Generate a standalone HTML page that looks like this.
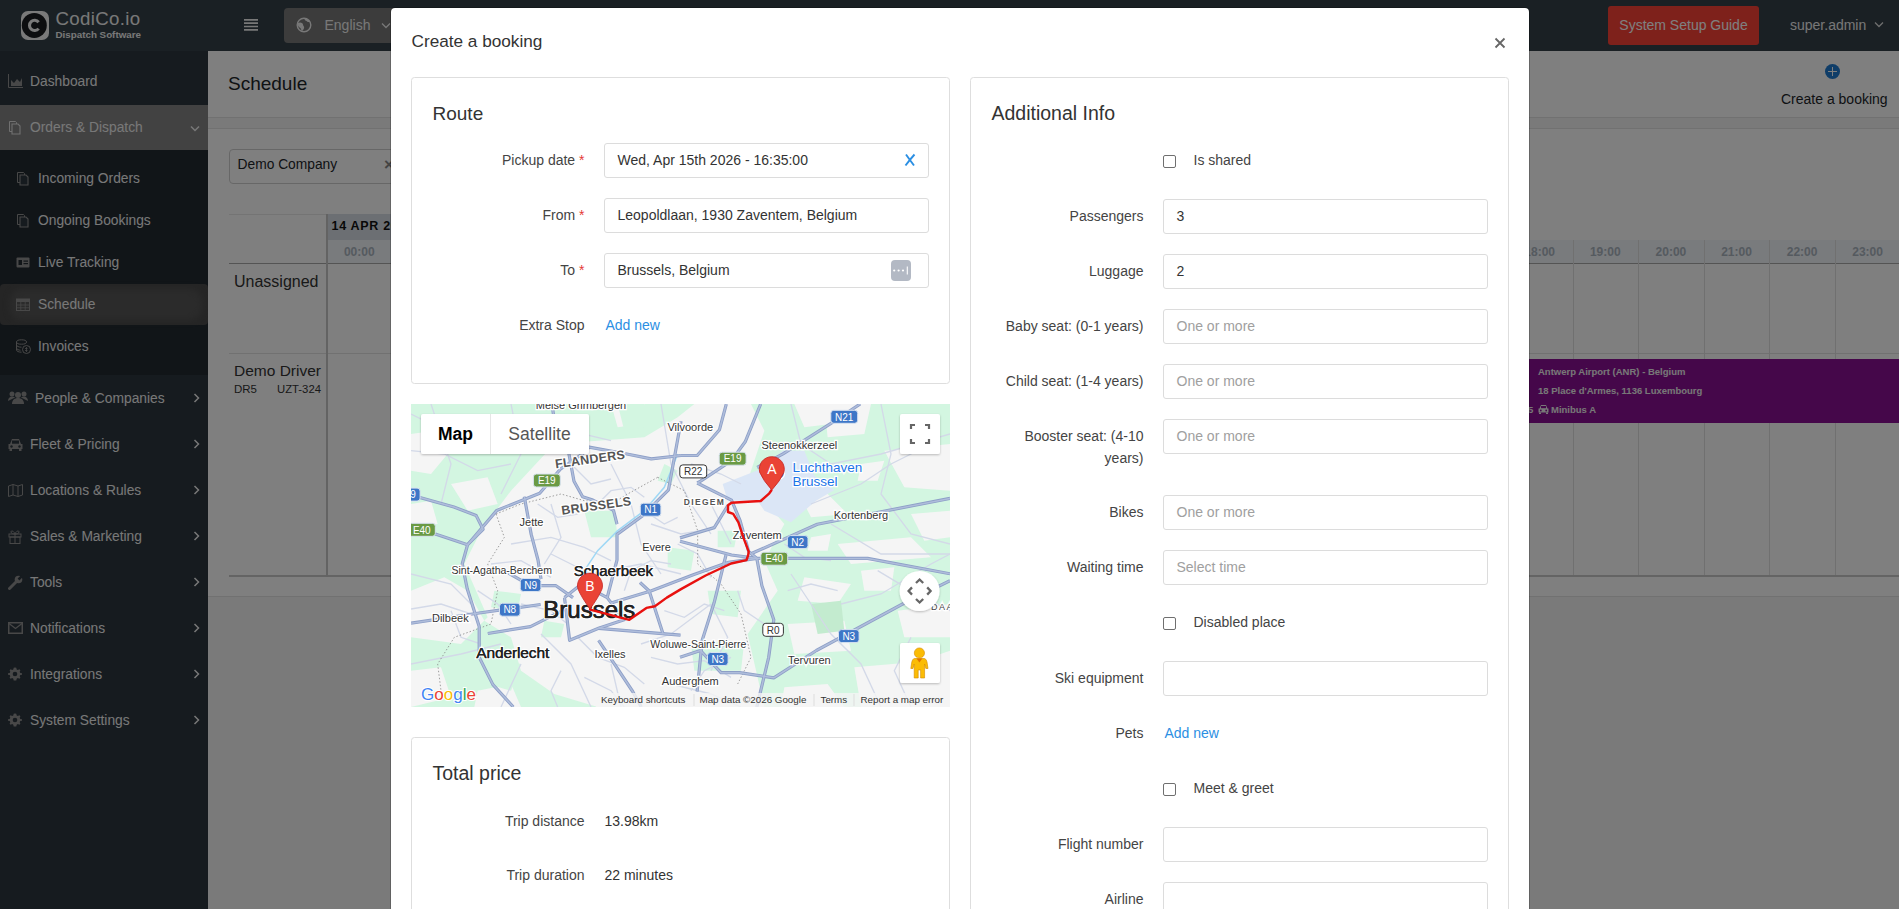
<!DOCTYPE html>
<html><head><meta charset="utf-8">
<style>
*{box-sizing:border-box;}
html,body{margin:0;padding:0;}
body{width:1899px;height:909px;overflow:hidden;position:relative;font-family:"Liberation Sans",sans-serif;font-size:14px;color:#333;background:#f4f4f4;}
.abs{position:absolute;}
/* header */
#hdr{position:absolute;left:0;top:0;width:1899px;height:51px;background:#344048;}
#side{position:absolute;left:0;top:51px;width:208px;height:858px;background:#2c363e;}
#content{position:absolute;left:208px;top:51px;width:1691px;height:858px;background:#f4f4f4;}
#overlay{position:absolute;left:0;top:0;width:1899px;height:909px;background:rgba(0,0,0,.5);}
.nav{position:absolute;left:0;width:208px;height:46px;color:#c8c8c8;font-size:14px;}
.nav .t{position:absolute;left:30px;top:0;line-height:46px;}
.nav .chev{position:absolute;right:9px;top:19px;width:6px;height:6px;border-right:1.5px solid #c8c8c8;border-top:1.5px solid #c8c8c8;transform:rotate(45deg);}
.sub{position:absolute;left:0;width:208px;height:42px;color:#c8c8c8;font-size:14px;}
.sub .t{position:absolute;left:38px;top:0;line-height:42px;}
/* modal */
#modal{position:absolute;left:390px;top:7px;width:1140px;height:1000px;background:#fff;background-clip:padding-box;border:1px solid rgba(0,0,0,.2);border-radius:5px;}
.card{position:absolute;background:#fff;border:1px solid #dcdcdc;border-radius:4px;}
.ctitle{position:absolute;font-size:20px;color:#333;}
.lbl{position:absolute;text-align:right;font-size:14px;color:#444;white-space:nowrap;}
.req{color:#e53935;}
.inp{position:absolute;height:35px;border:1px solid #d9d9d9;border-radius:3px;font-size:14px;color:#333;padding-left:13px;line-height:33px;white-space:nowrap;}
.ph{color:#999;}
.link{position:absolute;color:#2b8fe0;font-size:14px;}
.cb{position:absolute;width:13px;height:13px;border:1px solid #767676;border-radius:2px;background:#fff;}
</style></head>
<body>
<div id="hdr">
  <div class="abs" style="left:20.5px;top:11px;width:28px;height:29px;border-radius:7px;background:#f4f4f4;"></div>
  <svg class="abs" style="left:20px;top:11px" width="29" height="29" viewBox="0 0 29 29"><circle cx="14.3" cy="14.4" r="12.5" fill="#1a1d20"/><path d="M18.6 11.2A5.1 5.1 0 1 0 18.6 17.6" fill="none" stroke="#f4f4f4" stroke-width="3.1"/></svg>
  <div class="abs" style="left:55.4px;top:10.2px;font-size:18.7px;line-height:1;color:#f0f0f0;letter-spacing:0.35px;">CodiCo.io</div>
  <div class="abs" style="left:55.5px;top:30.2px;font-size:9.8px;line-height:1;font-weight:bold;color:#f0f0f0;">Dispatch Software</div>
  <svg class="abs" style="left:243px;top:18px" width="16" height="14" viewBox="0 0 16 14"><path d="M1 1.8H15M1 5.1H15M1 8.5H15M1 11.8H15" stroke="#f0f0f0" stroke-width="1.7"/></svg>
  <div class="abs" style="left:284px;top:8px;width:150px;height:35px;border-radius:4px;background:#787878;"></div>
  <svg class="abs" style="left:296px;top:17px" width="16" height="16" viewBox="0 0 16 16"><circle cx="8" cy="8" r="6.8" fill="none" stroke="#f0f0f0" stroke-width="1.4"/><path d="M1.8 6.2C3 5.3 5 5.2 6.3 6.3c1 0.9 0.6 2 1.4 2.9 0.8 0.9 0.4 2.4-0.4 3.5-0.8 1.1-1.5 1.6-1.9 0.6-0.4-1.2-0.5-2-1.5-2.6C2.6 10 1.6 8.6 1.8 6.2z M8.6 1.3c2.2 0 4.4 1.4 5.4 3.3-0.9 0.8-2.2 0.6-2.9-0.2-0.6-0.7-1.7-0.4-2.2-1.3-0.3-0.6-0.4-1.2-0.3-1.8z" fill="#f0f0f0"/></svg>
  <div class="abs" style="left:324.5px;top:17.85px;font-size:14px;line-height:1;color:#f0f0f0;">English</div>
  <svg class="abs" style="left:381px;top:22px" width="10" height="7" viewBox="0 0 10 7"><path d="M1 1.5L5 5.5L9 1.5" fill="none" stroke="#f0f0f0" stroke-width="1.3"/></svg>
  <div class="abs" style="left:1608px;top:6px;width:151px;height:39px;border-radius:3px;background:#fc4237;color:#fff;font-size:14px;line-height:39px;text-align:center;">System Setup Guide</div>
  <div class="abs" style="left:1790px;top:6px;line-height:39px;font-size:14px;color:#eee;">super.admin</div>
  <svg class="abs" style="left:1874px;top:21px" width="10" height="7" viewBox="0 0 10 7"><path d="M1 1.5L5 5.5L9 1.5" fill="none" stroke="#ddd" stroke-width="1.3"/></svg>
</div>

<div id="side">
<div class="abs" style="left:0;top:54px;width:208px;height:45px;background:#858585;"></div>
<div class="abs" style="left:0;top:99px;width:208px;height:225px;background:#222a30;"></div>
<div class="abs" style="left:0;top:233px;width:208px;height:41px;background:#4a4a4a;border-radius:4px;"></div>
<div class="abs" style="left:10px;top:238px;width:192px;height:31px;background:#565656;border-radius:12px;filter:blur(3px);"></div>
<div class="abs" style="left:30px;top:24.1px;font-size:13.8px;line-height:1;color:#f0f0f0;white-space:nowrap;">Dashboard</div>
<div class="abs" style="left:30px;top:70.1px;font-size:13.8px;line-height:1;color:#f0f0f0;white-space:nowrap;">Orders &amp; Dispatch</div>
<svg class="abs" style="left:190px;top:74px" width="10" height="7" viewBox="0 0 10 7"><path d="M1 1.5L5 5.5L9 1.5" fill="none" stroke="#f0f0f0" stroke-width="1.5"/></svg>
<div class="abs" style="left:38px;top:121.1px;font-size:13.8px;line-height:1;color:#f0f0f0;white-space:nowrap;">Incoming Orders</div>
<div class="abs" style="left:38px;top:163.1px;font-size:13.8px;line-height:1;color:#f0f0f0;white-space:nowrap;">Ongoing Bookings</div>
<div class="abs" style="left:38px;top:205.1px;font-size:13.8px;line-height:1;color:#f0f0f0;white-space:nowrap;">Live Tracking</div>
<div class="abs" style="left:38px;top:247.1px;font-size:13.8px;line-height:1;color:#f0f0f0;white-space:nowrap;">Schedule</div>
<div class="abs" style="left:38px;top:289.1px;font-size:13.8px;line-height:1;color:#f0f0f0;white-space:nowrap;">Invoices</div>
<div class="abs" style="left:35px;top:341.1px;font-size:13.8px;line-height:1;color:#f0f0f0;white-space:nowrap;">People &amp; Companies</div>
<svg class="abs" style="left:193px;top:342px" width="7" height="10" viewBox="0 0 7 10"><path d="M1.5 1L5.5 5L1.5 9" fill="none" stroke="#f0f0f0" stroke-width="1.5"/></svg>
<div class="abs" style="left:30px;top:387.1px;font-size:13.8px;line-height:1;color:#f0f0f0;white-space:nowrap;">Fleet &amp; Pricing</div>
<svg class="abs" style="left:193px;top:388px" width="7" height="10" viewBox="0 0 7 10"><path d="M1.5 1L5.5 5L1.5 9" fill="none" stroke="#f0f0f0" stroke-width="1.5"/></svg>
<div class="abs" style="left:30px;top:433.1px;font-size:13.8px;line-height:1;color:#f0f0f0;white-space:nowrap;">Locations &amp; Rules</div>
<svg class="abs" style="left:193px;top:434px" width="7" height="10" viewBox="0 0 7 10"><path d="M1.5 1L5.5 5L1.5 9" fill="none" stroke="#f0f0f0" stroke-width="1.5"/></svg>
<div class="abs" style="left:30px;top:479.1px;font-size:13.8px;line-height:1;color:#f0f0f0;white-space:nowrap;">Sales &amp; Marketing</div>
<svg class="abs" style="left:193px;top:480px" width="7" height="10" viewBox="0 0 7 10"><path d="M1.5 1L5.5 5L1.5 9" fill="none" stroke="#f0f0f0" stroke-width="1.5"/></svg>
<div class="abs" style="left:30px;top:525.1px;font-size:13.8px;line-height:1;color:#f0f0f0;white-space:nowrap;">Tools</div>
<svg class="abs" style="left:193px;top:526px" width="7" height="10" viewBox="0 0 7 10"><path d="M1.5 1L5.5 5L1.5 9" fill="none" stroke="#f0f0f0" stroke-width="1.5"/></svg>
<div class="abs" style="left:30px;top:571.1px;font-size:13.8px;line-height:1;color:#f0f0f0;white-space:nowrap;">Notifications</div>
<svg class="abs" style="left:193px;top:572px" width="7" height="10" viewBox="0 0 7 10"><path d="M1.5 1L5.5 5L1.5 9" fill="none" stroke="#f0f0f0" stroke-width="1.5"/></svg>
<div class="abs" style="left:30px;top:617.1px;font-size:13.8px;line-height:1;color:#f0f0f0;white-space:nowrap;">Integrations</div>
<svg class="abs" style="left:193px;top:618px" width="7" height="10" viewBox="0 0 7 10"><path d="M1.5 1L5.5 5L1.5 9" fill="none" stroke="#f0f0f0" stroke-width="1.5"/></svg>
<div class="abs" style="left:30px;top:663.1px;font-size:13.8px;line-height:1;color:#f0f0f0;white-space:nowrap;">System Settings</div>
<svg class="abs" style="left:193px;top:664px" width="7" height="10" viewBox="0 0 7 10"><path d="M1.5 1L5.5 5L1.5 9" fill="none" stroke="#f0f0f0" stroke-width="1.5"/></svg>
<svg class="abs" style="left:8px;top:23px" width="15" height="14" viewBox="0 0 15 14"><path d="M0.5 0v13.5H15" fill="none" stroke="#909090" stroke-width="1"/><path d="M3 12V6l3 3 3-4 3 3 2-4v8z" fill="#909090"/></svg>
<svg class="abs" style="left:8px;top:69px" width="14" height="15" viewBox="0 0 14 15"><path d="M1.5 1.5h6l1 1v9h-7z" fill="none" stroke="#e0e0e0" stroke-width="1"/><path d="M4 4h6l2 2v8H4z" fill="#858585" stroke="#e0e0e0" stroke-width="1.1"/></svg>
<svg class="abs" style="left:16px;top:120px" width="14" height="15" viewBox="0 0 14 15"><path d="M1.5 1.5h6l1 1v9h-7z" fill="none" stroke="#909090" stroke-width="1"/><path d="M4 4h6l2 2v8H4z" fill="#2c363e" stroke="#909090" stroke-width="1.1"/></svg>
<svg class="abs" style="left:16px;top:162px" width="14" height="15" viewBox="0 0 14 15"><path d="M1.5 1.5h6l1 1v9h-7z" fill="none" stroke="#909090" stroke-width="1"/><path d="M4 4h6l2 2v8H4z" fill="#2c363e" stroke="#909090" stroke-width="1.1"/></svg>
<svg class="abs" style="left:16px;top:206px" width="14" height="11" viewBox="0 0 14 11"><rect x="0.5" y="0.5" width="13" height="10" rx="1" fill="#909090"/><rect x="2.5" y="3" width="3.5" height="5" fill="#222a30"/><rect x="7.5" y="3.5" width="4.5" height="1.2" fill="#222a30"/><rect x="7.5" y="6" width="4.5" height="1.2" fill="#222a30"/></svg>
<svg class="abs" style="left:16px;top:246px" width="14" height="14" viewBox="0 0 14 14"><rect x="0.5" y="2" width="13" height="11.5" fill="none" stroke="#909090" stroke-width="1"/><rect x="0.5" y="2" width="13" height="3" fill="#909090"/><path d="M0.5 8h13M0.5 10.8h13M4.8 5v8.5M9.2 5v8.5" stroke="#909090" stroke-width="0.8"/></svg>
<svg class="abs" style="left:16px;top:288px" width="15" height="15" viewBox="0 0 15 15"><ellipse cx="5.5" cy="3" rx="5" ry="2.2" fill="none" stroke="#909090"/><path d="M0.5 3v8c0 1.2 2.2 2.2 5 2.2M0.5 6c0 1.2 2.2 2.2 5 2.2M0.5 9c0 1.2 2.2 2.2 4 2.2" fill="none" stroke="#909090"/><circle cx="10.5" cy="10.5" r="4" fill="#222a30" stroke="#909090"/><path d="M10.5 8v5M9 9.5h2.5M9 11.5h2.5" stroke="#909090" stroke-width="0.8"/></svg>
<svg class="abs" style="left:8px;top:340px" width="20" height="13" viewBox="0 0 20 13"><circle cx="4" cy="3" r="2.5" fill="#909090"/><circle cx="16" cy="3" r="2.5" fill="#909090"/><circle cx="10" cy="4" r="3" fill="#909090"/><path d="M0 10c0-3 2-4.5 4-4.5s3 1 3 1M20 10c0-3-2-4.5-4-4.5s-3 1-3 1" fill="#909090"/><path d="M4 13c0-4 2.5-6 6-6s6 2 6 6z" fill="#909090"/></svg>
<svg class="abs" style="left:8px;top:387px" width="15" height="13" viewBox="0 0 15 13"><path d="M2 6l2-5h7l2 5h1.5v5h-14V6z" fill="#909090"/><rect x="4" y="2.5" width="7" height="3.2" fill="#2c363e"/><circle cx="3.5" cy="8.5" r="1.2" fill="#2c363e"/><circle cx="11.5" cy="8.5" r="1.2" fill="#2c363e"/><rect x="1.5" y="11" width="2.5" height="2" fill="#909090"/><rect x="11" y="11" width="2.5" height="2" fill="#909090"/></svg>
<svg class="abs" style="left:8px;top:433px" width="15" height="13" viewBox="0 0 15 13"><path d="M0.5 2l4.5-1.5 5 1.5 4.5-1.5v10.5l-4.5 1.5-5-1.5-4.5 1.5z M5 0.5v10.5M10 2v10.5" fill="none" stroke="#909090" stroke-width="1"/></svg>
<svg class="abs" style="left:8px;top:478px" width="14" height="15" viewBox="0 0 14 15"><rect x="1" y="5" width="12" height="3" fill="none" stroke="#909090"/><rect x="2" y="8" width="10" height="6.5" fill="none" stroke="#909090"/><path d="M7 5v9.5M7 5c-1-3-4-4-4-2s3 2 4 2c1 0 4 0 4-2s-3-1-4 2" fill="none" stroke="#909090"/></svg>
<svg class="abs" style="left:8px;top:524px" width="15" height="15" viewBox="0 0 15 15"><path d="M1.5 13.5l6.5-6.5" stroke="#909090" stroke-width="3" stroke-linecap="round"/><circle cx="10.5" cy="4.5" r="3.8" fill="#909090"/><path d="M10.5 4.5l4-4" stroke="#2c363e" stroke-width="2.5"/></svg>
<svg class="abs" style="left:8px;top:571px" width="15" height="12" viewBox="0 0 15 12"><rect x="0.75" y="0.75" width="13.5" height="10.5" fill="none" stroke="#909090" stroke-width="1.5"/><path d="M1 1.5l6.5 5 6.5-5" fill="none" stroke="#909090" stroke-width="1.3"/></svg>
<svg class="abs" style="left:8px;top:616px" width="14" height="14" viewBox="0 0 14 14"><path d="M7 0.5l1.3 0.2 0.4 1.7 1.1 0.6 1.6-0.7 1 0.9-0.7 1.6 0.6 1.1 1.7 0.4v1.4l-1.7 0.4-0.6 1.1 0.7 1.6-1 1-1.6-0.7-1.1 0.6-0.4 1.7H5.7l-0.4-1.7-1.1-0.6-1.6 0.7-1-1 0.7-1.6-0.6-1.1L0 7.7V6.3l1.7-0.4 0.6-1.1-0.7-1.6 1-0.9 1.6 0.7 1.1-0.6 0.4-1.7z" fill="#909090"/><circle cx="7" cy="7" r="2.3" fill="#2c363e"/></svg>
<svg class="abs" style="left:8px;top:662px" width="14" height="14" viewBox="0 0 14 14"><path d="M7 0.5l1.3 0.2 0.4 1.7 1.1 0.6 1.6-0.7 1 0.9-0.7 1.6 0.6 1.1 1.7 0.4v1.4l-1.7 0.4-0.6 1.1 0.7 1.6-1 1-1.6-0.7-1.1 0.6-0.4 1.7H5.7l-0.4-1.7-1.1-0.6-1.6 0.7-1-1 0.7-1.6-0.6-1.1L0 7.7V6.3l1.7-0.4 0.6-1.1-0.7-1.6 1-0.9 1.6 0.7 1.1-0.6 0.4-1.7z" fill="#909090"/><circle cx="7" cy="7" r="2.3" fill="#2c363e"/></svg>
</div>

<div id="content">
<div class="abs" style="left:0px;top:0px;width:1691px;height:67px;background:#fff;border-bottom:1px solid #e3e3e3;"></div>
<div class="abs" style="left:20.0px;top:23.1px;font-size:19px;line-height:1;color:#212529;font-weight:normal;white-space:nowrap;">Schedule</div>
<div class="abs" style="left:1617px;top:13px;width:15px;height:15px;border-radius:50%;background:#1e7ad0;"></div>
<div class="abs" style="left:1620px;top:19.799999999999997px;width:9px;height:1.6000000000000085px;background:#fff;"></div>
<div class="abs" style="left:1623.7px;top:16px;width:1.599999999999909px;height:9px;background:#fff;"></div>
<div class="abs" style="left:1573.0px;top:40.6px;font-size:14px;line-height:1;color:#212529;font-weight:normal;white-space:nowrap;">Create a booking</div>
<div class="abs" style="left:0px;top:77px;width:1691px;height:469px;background:#fff;border-top:1px solid #e3e3e3;border-bottom:1px solid #e3e3e3;"></div>
<div class="abs" style="left:21px;top:98px;width:221px;height:35px;border:1px solid #cfcfcf;border-radius:4px;"></div>
<div class="abs" style="left:29.5px;top:107.2px;font-size:13.8px;line-height:1;color:#212529;font-weight:normal;white-space:nowrap;">Demo Company</div>
<div class="abs" style="left:176.0px;top:104.6px;font-size:17px;line-height:1;color:#888;font-weight:bold;white-space:nowrap;">&#215;</div>
<div class="abs" style="left:21px;top:163px;width:471px;height:1px;background:#e8e8e8;"></div>
<div class="abs" style="left:119px;top:163px;width:373px;height:26px;background:#d9dfe6;"></div>
<div class="abs" style="left:123.5px;top:169.4px;font-size:12.5px;line-height:1;color:#111;font-weight:bold;white-space:nowrap;letter-spacing:0.7px;">14 APR 2026</div>
<div class="abs" style="left:119px;top:189px;width:1572px;height:24px;background:#f3f6fa;"></div>
<div class="abs" style="left:21px;top:212px;width:1670px;height:1px;background:#a9a9a9;"></div>
<div class="abs" style="left:21px;top:302px;width:1670px;height:1px;background:#e2e2e2;"></div>
<div class="abs" style="left:21px;top:524px;width:1670px;height:2px;background:#c8c8c8;"></div>
<div class="abs" style="left:118px;top:163px;width:2px;height:363px;background:#c6c6c6;"></div>
<div class="abs" style="left:118.5px;top:193px;width:65.6px;line-height:17px;text-align:center;font-size:12px;font-weight:bold;color:#aab4bf;">00:00</div>
<div class="abs" style="left:184.1px;top:193px;width:65.6px;line-height:17px;text-align:center;font-size:12px;font-weight:bold;color:#aab4bf;">01:00</div>
<div class="abs" style="left:184.1px;top:189px;width:1px;height:335px;background:#e0e0e0;"></div>
<div class="abs" style="left:249.7px;top:193px;width:65.6px;line-height:17px;text-align:center;font-size:12px;font-weight:bold;color:#aab4bf;">02:00</div>
<div class="abs" style="left:249.7px;top:189px;width:1px;height:335px;background:#e0e0e0;"></div>
<div class="abs" style="left:315.2px;top:193px;width:65.6px;line-height:17px;text-align:center;font-size:12px;font-weight:bold;color:#aab4bf;">03:00</div>
<div class="abs" style="left:315.2px;top:189px;width:1px;height:335px;background:#e0e0e0;"></div>
<div class="abs" style="left:380.8px;top:193px;width:65.6px;line-height:17px;text-align:center;font-size:12px;font-weight:bold;color:#aab4bf;">04:00</div>
<div class="abs" style="left:380.8px;top:189px;width:1px;height:335px;background:#e0e0e0;"></div>
<div class="abs" style="left:446.4px;top:193px;width:65.6px;line-height:17px;text-align:center;font-size:12px;font-weight:bold;color:#aab4bf;">05:00</div>
<div class="abs" style="left:446.4px;top:189px;width:1px;height:335px;background:#e0e0e0;"></div>
<div class="abs" style="left:512.0px;top:193px;width:65.6px;line-height:17px;text-align:center;font-size:12px;font-weight:bold;color:#aab4bf;">06:00</div>
<div class="abs" style="left:512.0px;top:189px;width:1px;height:335px;background:#e0e0e0;"></div>
<div class="abs" style="left:577.6px;top:193px;width:65.6px;line-height:17px;text-align:center;font-size:12px;font-weight:bold;color:#aab4bf;">07:00</div>
<div class="abs" style="left:577.6px;top:189px;width:1px;height:335px;background:#e0e0e0;"></div>
<div class="abs" style="left:643.1px;top:193px;width:65.6px;line-height:17px;text-align:center;font-size:12px;font-weight:bold;color:#aab4bf;">08:00</div>
<div class="abs" style="left:643.1px;top:189px;width:1px;height:335px;background:#e0e0e0;"></div>
<div class="abs" style="left:708.7px;top:193px;width:65.6px;line-height:17px;text-align:center;font-size:12px;font-weight:bold;color:#aab4bf;">09:00</div>
<div class="abs" style="left:708.7px;top:189px;width:1px;height:335px;background:#e0e0e0;"></div>
<div class="abs" style="left:774.3px;top:193px;width:65.6px;line-height:17px;text-align:center;font-size:12px;font-weight:bold;color:#aab4bf;">10:00</div>
<div class="abs" style="left:774.3px;top:189px;width:1px;height:335px;background:#e0e0e0;"></div>
<div class="abs" style="left:839.9px;top:193px;width:65.6px;line-height:17px;text-align:center;font-size:12px;font-weight:bold;color:#aab4bf;">11:00</div>
<div class="abs" style="left:839.9px;top:189px;width:1px;height:335px;background:#e0e0e0;"></div>
<div class="abs" style="left:905.5px;top:193px;width:65.6px;line-height:17px;text-align:center;font-size:12px;font-weight:bold;color:#aab4bf;">12:00</div>
<div class="abs" style="left:905.5px;top:189px;width:1px;height:335px;background:#e0e0e0;"></div>
<div class="abs" style="left:971.0px;top:193px;width:65.6px;line-height:17px;text-align:center;font-size:12px;font-weight:bold;color:#aab4bf;">13:00</div>
<div class="abs" style="left:971.0px;top:189px;width:1px;height:335px;background:#e0e0e0;"></div>
<div class="abs" style="left:1036.6px;top:193px;width:65.6px;line-height:17px;text-align:center;font-size:12px;font-weight:bold;color:#aab4bf;">14:00</div>
<div class="abs" style="left:1036.6px;top:189px;width:1px;height:335px;background:#e0e0e0;"></div>
<div class="abs" style="left:1102.2px;top:193px;width:65.6px;line-height:17px;text-align:center;font-size:12px;font-weight:bold;color:#aab4bf;">15:00</div>
<div class="abs" style="left:1102.2px;top:189px;width:1px;height:335px;background:#e0e0e0;"></div>
<div class="abs" style="left:1167.8px;top:193px;width:65.6px;line-height:17px;text-align:center;font-size:12px;font-weight:bold;color:#aab4bf;">16:00</div>
<div class="abs" style="left:1167.8px;top:189px;width:1px;height:335px;background:#e0e0e0;"></div>
<div class="abs" style="left:1233.4px;top:193px;width:65.6px;line-height:17px;text-align:center;font-size:12px;font-weight:bold;color:#aab4bf;">17:00</div>
<div class="abs" style="left:1233.4px;top:189px;width:1px;height:335px;background:#e0e0e0;"></div>
<div class="abs" style="left:1298.9px;top:193px;width:65.6px;line-height:17px;text-align:center;font-size:12px;font-weight:bold;color:#aab4bf;">18:00</div>
<div class="abs" style="left:1298.9px;top:189px;width:1px;height:335px;background:#e0e0e0;"></div>
<div class="abs" style="left:1364.5px;top:193px;width:65.6px;line-height:17px;text-align:center;font-size:12px;font-weight:bold;color:#aab4bf;">19:00</div>
<div class="abs" style="left:1364.5px;top:189px;width:1px;height:335px;background:#e0e0e0;"></div>
<div class="abs" style="left:1430.1px;top:193px;width:65.6px;line-height:17px;text-align:center;font-size:12px;font-weight:bold;color:#aab4bf;">20:00</div>
<div class="abs" style="left:1430.1px;top:189px;width:1px;height:335px;background:#e0e0e0;"></div>
<div class="abs" style="left:1495.7px;top:193px;width:65.6px;line-height:17px;text-align:center;font-size:12px;font-weight:bold;color:#aab4bf;">21:00</div>
<div class="abs" style="left:1495.7px;top:189px;width:1px;height:335px;background:#e0e0e0;"></div>
<div class="abs" style="left:1561.3px;top:193px;width:65.6px;line-height:17px;text-align:center;font-size:12px;font-weight:bold;color:#aab4bf;">22:00</div>
<div class="abs" style="left:1561.3px;top:189px;width:1px;height:335px;background:#e0e0e0;"></div>
<div class="abs" style="left:1626.8px;top:193px;width:65.6px;line-height:17px;text-align:center;font-size:12px;font-weight:bold;color:#aab4bf;">23:00</div>
<div class="abs" style="left:1626.8px;top:189px;width:1px;height:335px;background:#e0e0e0;"></div>
<div class="abs" style="left:26.0px;top:222.5px;font-size:16px;line-height:1;color:#333;font-weight:normal;white-space:nowrap;">Unassigned</div>
<div class="abs" style="left:26.0px;top:311.9px;font-size:15.5px;line-height:1;color:#333;font-weight:normal;white-space:nowrap;">Demo Driver</div>
<div class="abs" style="left:26.0px;top:332.8px;font-size:11.5px;line-height:1;color:#333;font-weight:normal;white-space:nowrap;">DR5</div>
<div class="abs" style="left:69.0px;top:332.9px;font-size:11.3px;line-height:1;color:#333;font-weight:normal;white-space:nowrap;">UZT-324</div>
<div class="abs" style="left:992px;top:308px;width:699px;height:64px;background:#8a0e94;"></div>
<div class="abs" style="left:1330.0px;top:315.5px;font-size:9.5px;line-height:1;color:#f0f0f0;font-weight:bold;white-space:nowrap;">Antwerp Airport (ANR) - Belgium</div>
<div class="abs" style="left:1330.0px;top:334.5px;font-size:9.5px;line-height:1;color:#f0f0f0;font-weight:bold;white-space:nowrap;">18 Place d'Armes, 1136 Luxembourg</div>
<div class="abs" style="left:1320.0px;top:353.5px;font-size:9.5px;line-height:1;color:#f0f0f0;font-weight:bold;white-space:nowrap;">5</div>
<svg class="abs" style="left:1330px;top:353px" width="11" height="10" viewBox="0 0 11 10"><path d="M1.5 4.5l1.5-3.5h5l1.5 3.5h1v4h-10v-4z" fill="#f0f0f0"/><rect x="3" y="2" width="5" height="2.2" fill="#8a0e94"/><circle cx="2.8" cy="6.5" r="0.9" fill="#8a0e94"/><circle cx="8.2" cy="6.5" r="0.9" fill="#8a0e94"/><rect x="1" y="8.5" width="2" height="1.5" fill="#f0f0f0"/><rect x="8" y="8.5" width="2" height="1.5" fill="#f0f0f0"/></svg>
<div class="abs" style="left:1343.0px;top:353.5px;font-size:9.5px;line-height:1;color:#f0f0f0;font-weight:bold;white-space:nowrap;">Minibus A</div>
</div>

<div id="overlay"></div>

<div id="modal">
<!--MSTART-->
<div class="abs" style="left:20.5px;top:24.7px;font-size:17.2px;line-height:1;color:#333;font-weight:normal;white-space:nowrap;">Create a booking</div>
<svg class="abs" style="left:1103px;top:29px" width="12" height="12" viewBox="0 0 12 12"><path d="M1.5 1.5L10.5 10.5M10.5 1.5L1.5 10.5" stroke="#666" stroke-width="1.8"/></svg>
<div class="abs" style="left:20px;top:69px;width:539px;height:307px;border:1px solid #dedede;border-radius:3.5px;"></div>
<div class="abs" style="left:41.5px;top:95.9px;font-size:19px;line-height:1;color:#333;font-weight:normal;white-space:nowrap;">Route</div>
<div class="abs" style="right:944.5px;top:145.1px;font-size:14px;line-height:1;color:#444;font-weight:normal;white-space:nowrap;text-align:right;">Pickup date <span style="color:#e53935">*</span></div>
<div class="abs" style="left:213px;top:135px;width:325px;height:35px;border:1px solid #dcdcdc;border-radius:3px;background:#fff;"></div>
<div class="abs" style="left:226.5px;top:145.1px;font-size:14px;line-height:1;color:#333;font-weight:normal;white-space:nowrap;">Wed, Apr 15th 2026 - 16:35:00</div>
<svg class="abs" style="left:513px;top:145px" width="12" height="14" viewBox="0 0 12 14"><path d="M2 1.5Q5.5 6.5 10 12.5M10.5 1.5Q6 6.5 1.5 12.5" fill="none" stroke="#2b8fe3" stroke-width="1.9"/></svg>
<div class="abs" style="right:944.5px;top:200.1px;font-size:14px;line-height:1;color:#444;font-weight:normal;white-space:nowrap;text-align:right;">From <span style="color:#e53935">*</span></div>
<div class="abs" style="left:213px;top:190px;width:325px;height:35px;border:1px solid #dcdcdc;border-radius:3px;background:#fff;"></div>
<div class="abs" style="left:226.5px;top:200.1px;font-size:14px;line-height:1;color:#333;font-weight:normal;white-space:nowrap;">Leopoldlaan, 1930 Zaventem, Belgium</div>
<div class="abs" style="right:944.5px;top:255.1px;font-size:14px;line-height:1;color:#444;font-weight:normal;white-space:nowrap;text-align:right;">To <span style="color:#e53935">*</span></div>
<div class="abs" style="left:213px;top:245px;width:325px;height:35px;border:1px solid #dcdcdc;border-radius:3px;background:#fff;"></div>
<div class="abs" style="left:226.5px;top:255.1px;font-size:14px;line-height:1;color:#333;font-weight:normal;white-space:nowrap;">Brussels, Belgium</div>
<div class="abs" style="left:500px;top:252px;width:20px;height:21px;background:#b3b9c4;border-radius:4px;"></div>
<svg class="abs" style="left:500px;top:252px" width="20" height="21" viewBox="0 0 20 21"><circle cx="3.2" cy="10.5" r="1.1" fill="#fff"/><circle cx="7.6" cy="10.5" r="1.1" fill="#fff"/><circle cx="12" cy="10.5" r="1.1" fill="#fff"/><path d="M16.3 6.5V14.5" stroke="#fff" stroke-width="1.1"/></svg>
<div class="abs" style="right:944.5px;top:310.1px;font-size:14px;line-height:1;color:#444;font-weight:normal;white-space:nowrap;text-align:right;">Extra Stop</div>
<div class="abs" style="left:214.5px;top:310.1px;font-size:14px;line-height:1;color:#2b8fe3;font-weight:normal;white-space:nowrap;">Add new</div>
<svg class="abs" style="left:20px;top:396px" width="539" height="303" viewBox="0 0 539 303" font-family="Liberation Sans, sans-serif">
<rect width="539" height="303" fill="#f5f5f5"/>
<rect width="539" height="303" fill="#d3f6e1"/>
<g transform="scale(0.33333)">
<polygon points="430.0,120.0 560.0,110.0 700.0,100.0 800.0,40.0 850.0,0.0 1020.0,0.0 1060.0,80.0 1010.0,230.0 1120.0,360.0 1060.0,470.0 1100.0,560.0 1010.0,690.0 1060.0,909.0 560.0,909.0 430.0,870.0 330.0,800.0 300.0,700.0 220.0,650.0 170.0,560.0 100.0,520.0 0.0,560.0 0.0,700.0 150.0,720.0 230.0,640.0 160.0,480.0 210.0,380.0 300.0,260.0" fill="#f5f5f5"/>
<polygon points="0.0,90.0 70.0,80.0 110.0,150.0 60.0,210.0 0.0,200.0" fill="#f5f5f5"/>
<polygon points="120.0,240.0 230.0,220.0 260.0,300.0 170.0,320.0" fill="#f5f5f5"/>
<polygon points="1150.0,240.0 1230.0,250.0 1310.0,330.0 1200.0,340.0" fill="#f5f5f5"/>
<polygon points="1280.0,420.0 1500.0,400.0 1560.0,460.0 1320.0,480.0" fill="#f5f5f5"/>
<polygon points="1330.0,790.0 1560.0,770.0 1617.0,909.0 1350.0,909.0" fill="#f5f5f5"/>
<polygon points="1420.0,140.0 1617.0,120.0 1617.0,260.0 1480.0,250.0" fill="#f5f5f5"/>
<polygon points="1130.0,660.0 1300.0,650.0 1320.0,740.0 1150.0,750.0" fill="#f5f5f5"/>
<polygon points="1150.0,0.0 1300.0,0.0 1260.0,60.0 1180.0,70.0" fill="#f5f5f5"/>
<polygon points="600.0,0.0 700.0,0.0 690.0,60.0 620.0,70.0" fill="#f5f5f5"/>
<polygon points="1180.0,520.0 1320.0,540.0 1280.0,600.0 1160.0,590.0" fill="#f5f5f5"/>
<polygon points="1460.0,620.0 1617.0,600.0 1617.0,700.0 1480.0,700.0" fill="#f5f5f5"/>
<polygon points="1120.0,850.0 1250.0,840.0 1300.0,909.0 1110.0,909.0" fill="#f5f5f5"/>
<polygon points="0.0,800.0 90.0,790.0 120.0,880.0 0.0,909.0" fill="#f5f5f5"/>
<polygon points="200.0,860.0 300.0,840.0 330.0,909.0 190.0,909.0" fill="#f5f5f5"/>
<polygon points="1350.0,180.0 1420.0,170.0 1400.0,230.0 1340.0,230.0" fill="#f5f5f5"/>
<polygon points="1240.0,0.0 1380.0,0.0 1360.0,90.0 1250.0,100.0" fill="#f5f5f5"/>
<polygon points="1500.0,330.0 1617.0,320.0 1617.0,400.0 1540.0,410.0" fill="#f5f5f5"/>
<polygon points="1350.0,500.0 1450.0,490.0 1440.0,560.0 1360.0,560.0" fill="#f5f5f5"/>
<polygon points="1200.0,400.0 1260.0,390.0 1250.0,440.0 1190.0,440.0" fill="#f5f5f5"/>
<polygon points="1560.0,760.0 1617.0,740.0 1617.0,909.0 1570.0,909.0" fill="#f5f5f5"/>
<polygon points="0.0,300.0 60.0,290.0 80.0,360.0 0.0,370.0" fill="#f5f5f5"/>
<polygon points="520.0,320.0 610.0,320.0 620.0,400.0 540.0,400.0" fill="#d3f6e1"/>
<polygon points="770.0,430.0 850.0,440.0 840.0,500.0 770.0,490.0" fill="#d3f6e1"/>
<polygon points="890.0,560.0 990.0,560.0 980.0,640.0 900.0,630.0" fill="#d3f6e1"/>
<polygon points="840.0,720.0 1000.0,710.0 990.0,800.0 850.0,800.0" fill="#d3f6e1"/>
<polygon points="620.0,0.0 700.0,0.0 700.0,70.0 640.0,80.0" fill="#d3f6e1"/>
<polygon points="250.0,560.0 330.0,570.0 320.0,620.0 240.0,610.0" fill="#d3f6e1"/>
<polygon points="400.0,650.0 460.0,660.0 450.0,700.0 390.0,700.0" fill="#d3f6e1"/>
<polygon points="920.0,380.0 980.0,380.0 970.0,430.0 920.0,430.0" fill="#d3f6e1"/>
<polygon points="760.0,180.0 800.0,200.0 780.0,240.0 740.0,230.0" fill="#d3f6e1"/>
<polygon points="240.0,760.0 330.0,780.0 300.0,860.0 230.0,840.0" fill="#d3f6e1"/>
<polygon points="1200.0,600.0 1290.0,590.0 1300.0,680.0 1220.0,690.0" fill="#c3ebcf"/>
<polygon points="935.0,240.0 1050.0,195.0 1115.0,140.0 1180.0,140.0 1210.0,215.0 1270.0,258.0 1215.0,290.0 1140.0,355.0 1060.0,320.0 1040.0,290.0 950.0,290.0" fill="#dbe6f6"/>
<path d="M300.0 420.0 L420.0 400.0 L520.0 430.0 L600.0 470.0" fill="none" stroke="#d3d9e8" stroke-width="4"/>
<path d="M240.0 480.0 L330.0 470.0 L420.0 520.0" fill="none" stroke="#d3d9e8" stroke-width="4"/>
<path d="M330.0 600.0 L420.0 620.0 L470.0 660.0" fill="none" stroke="#d3d9e8" stroke-width="4"/>
<path d="M500.0 700.0 L560.0 760.0 L640.0 790.0 L700.0 840.0" fill="none" stroke="#d3d9e8" stroke-width="4"/>
<path d="M720.0 760.0 L800.0 780.0 L880.0 770.0 L960.0 820.0" fill="none" stroke="#d3d9e8" stroke-width="4"/>
<path d="M760.0 620.0 L820.0 640.0 L880.0 600.0 L940.0 620.0" fill="none" stroke="#d3d9e8" stroke-width="4"/>
<path d="M800.0 420.0 L860.0 450.0 L900.0 520.0" fill="none" stroke="#d3d9e8" stroke-width="4"/>
<path d="M640.0 560.0 L660.0 500.0 L720.0 470.0 L780.0 480.0" fill="none" stroke="#d3d9e8" stroke-width="4"/>
<path d="M560.0 300.0 L600.0 260.0 L660.0 250.0 L700.0 280.0" fill="none" stroke="#d3d9e8" stroke-width="4"/>
<path d="M900.0 300.0 L930.0 360.0 L960.0 420.0" fill="none" stroke="#d3d9e8" stroke-width="4"/>
<path d="M380.0 300.0 L440.0 340.0 L500.0 330.0" fill="none" stroke="#d3d9e8" stroke-width="4"/>
<path d="M200.0 560.0 L260.0 600.0 L300.0 660.0" fill="none" stroke="#d3d9e8" stroke-width="4"/>
<path d="M120.0 620.0 L150.0 700.0 L210.0 720.0" fill="none" stroke="#d3d9e8" stroke-width="4"/>
<path d="M520.0 820.0 L600.0 860.0 L640.0 909.0" fill="none" stroke="#d3d9e8" stroke-width="4"/>
<path d="M840.0 860.0 L880.0 800.0 L960.0 760.0" fill="none" stroke="#d3d9e8" stroke-width="4"/>
<path d="M980.0 560.0 L1000.0 620.0 L1060.0 660.0" fill="none" stroke="#d3d9e8" stroke-width="4"/>
<path d="M700.0 320.0 L760.0 360.0 L800.0 340.0" fill="none" stroke="#d3d9e8" stroke-width="4"/>
<path d="M450.0 800.0 L420.0 860.0 L440.0 909.0" fill="none" stroke="#d3d9e8" stroke-width="4"/>
<path d="M1120.0 420.0 L1180.0 460.0 L1260.0 470.0" fill="none" stroke="#d3d9e8" stroke-width="4"/>
<path d="M1130.0 560.0 L1200.0 540.0 L1280.0 560.0" fill="none" stroke="#d3d9e8" stroke-width="4"/>
<path d="M0.0 30.0 L180.0 120.0 L390.0 60.0 L600.0 110.0" fill="none" stroke="#d3d9e8" stroke-width="4"/>
<path d="M60.0 0.0 L120.0 180.0 L90.0 300.0" fill="none" stroke="#d3d9e8" stroke-width="4"/>
<path d="M300.0 0.0 L330.0 150.0 L270.0 270.0" fill="none" stroke="#d3d9e8" stroke-width="4"/>
<path d="M420.0 450.0 L540.0 510.0 L690.0 480.0 L810.0 510.0" fill="none" stroke="#d3d9e8" stroke-width="4"/>
<path d="M600.0 180.0 L660.0 300.0 L690.0 420.0 L750.0 510.0" fill="none" stroke="#d3d9e8" stroke-width="4"/>
<path d="M750.0 0.0 L780.0 180.0 L840.0 300.0 L900.0 390.0" fill="none" stroke="#d3d9e8" stroke-width="4"/>
<path d="M1140.0 0.0 L1170.0 120.0 L1260.0 180.0 L1410.0 150.0 L1617.0 90.0" fill="none" stroke="#d3d9e8" stroke-width="4"/>
<path d="M1260.0 360.0 L1410.0 450.0 L1617.0 450.0" fill="none" stroke="#d3d9e8" stroke-width="4"/>
<path d="M0.0 510.0 L120.0 540.0 L180.0 600.0" fill="none" stroke="#d3d9e8" stroke-width="4"/>
<path d="M0.0 780.0 L150.0 750.0 L270.0 720.0" fill="none" stroke="#d3d9e8" stroke-width="4"/>
<path d="M390.0 690.0 L480.0 780.0 L540.0 909.0" fill="none" stroke="#d3d9e8" stroke-width="4"/>
<path d="M600.0 780.0 L630.0 909.0" fill="none" stroke="#d3d9e8" stroke-width="4"/>
<path d="M780.0 840.0 L900.0 870.0 L990.0 909.0" fill="none" stroke="#d3d9e8" stroke-width="4"/>
<path d="M1140.0 510.0 L1200.0 600.0 L1260.0 690.0 L1350.0 780.0 L1410.0 909.0" fill="none" stroke="#d3d9e8" stroke-width="4"/>
<path d="M1200.0 300.0 L1350.0 240.0 L1440.0 180.0 L1560.0 120.0" fill="none" stroke="#d3d9e8" stroke-width="4"/>
<path d="M1290.0 600.0 L1410.0 570.0 L1560.0 480.0 L1617.0 450.0" fill="none" stroke="#d3d9e8" stroke-width="4"/>
<path d="M0.0 615.0 L90.0 600.0 L180.0 630.0" fill="none" stroke="#d3d9e8" stroke-width="4"/>
<path d="M720.0 360.0 L810.0 390.0 L900.0 375.0" fill="none" stroke="#d3d9e8" stroke-width="4"/>
<path d="M480.0 180.0 L540.0 240.0 L600.0 225.0" fill="none" stroke="#d3d9e8" stroke-width="4"/>
<path d="M1410.0 0.0 L1440.0 150.0 L1410.0 270.0 L1500.0 390.0 L1617.0 420.0" fill="none" stroke="#d3d9e8" stroke-width="4"/>
<path d="M690.0 720.0 L780.0 690.0 L900.0 600.0" fill="none" stroke="#d3d9e8" stroke-width="4"/>
<path d="M330.0 780.0 L270.0 909.0" fill="none" stroke="#d3d9e8" stroke-width="4"/>
<path d="M840.0 180.0 L930.0 210.0 L990.0 240.0" fill="none" stroke="#d3d9e8" stroke-width="4"/>
<path d="M1500.0 700.0 L1450.0 800.0 L1500.0 909.0" fill="none" stroke="#d3d9e8" stroke-width="4"/>
<path d="M1617.0 620.0 L1500.0 560.0 L1400.0 500.0" fill="none" stroke="#d3d9e8" stroke-width="4"/>
<path d="M0.0 140.0 L100.0 150.0 L200.0 200.0 L300.0 180.0" fill="none" stroke="#d3d9e8" stroke-width="4"/>
<path d="M420.0 300.0 L450.0 400.0 L400.0 480.0" fill="none" stroke="#d3d9e8" stroke-width="4"/>
<path d="M900.0 600.0 L950.0 700.0 L900.0 800.0" fill="none" stroke="#d3d9e8" stroke-width="4"/>
<path d="M800.0 150.0 L760.0 250.0 L700.0 320.0 L620.0 380.0 L560.0 440.0 L520.0 500.0" fill="none" stroke="#9fd8f5" stroke-width="4.5"/>
<path d="M255.0 330.0 L330.0 300.0 L450.0 270.0 L520.0 290.0 L600.0 300.0 L650.0 270.0 L740.0 220.0" fill="none" stroke="#888" stroke-width="2.4" stroke-dasharray="4.5,6"/>
<path d="M255.0 330.0 L280.0 400.0 L230.0 480.0 L260.0 560.0 L240.0 660.0 L130.0 700.0 L80.0 780.0 L90.0 860.0" fill="none" stroke="#888" stroke-width="2.4" stroke-dasharray="4.5,6"/>
<path d="M740.0 220.0 L820.0 260.0 L860.0 380.0 L860.0 480.0 L930.0 540.0 L990.0 630.0 L1020.0 760.0 L980.0 840.0" fill="none" stroke="#888" stroke-width="2.4" stroke-dasharray="4.5,6"/>
</g>
<path d="M176.8 42.9 L214.6 49.8 L240.3 54.9 L270.0 51.5" fill="none" stroke="#8d9fc7" stroke-width="3.2" stroke-linejoin="round"/>
<path d="M0.0 91.0 L42.9 103.0 L65.2 111.6 L72.1 125.3 L56.6 140.7" fill="none" stroke="#8d9fc7" stroke-width="3.2" stroke-linejoin="round"/>
<path d="M56.6 140.7 L85.8 106.4 L128.7 89.3 L149.3 65.2 L171.6 49.8 L178.5 42.9" fill="none" stroke="#8d9fc7" stroke-width="3.2" stroke-linejoin="round"/>
<path d="M0.0 127.0 L25.7 130.4 L56.6 140.7" fill="none" stroke="#8d9fc7" stroke-width="3.2" stroke-linejoin="round"/>
<path d="M56.6 140.7 L51.2 160.0 L56.3 185.1 L68.2 222.6 L68.2 253.3 L81.9 280.6 L102.3 303.0" fill="none" stroke="#8d9fc7" stroke-width="3.2" stroke-linejoin="round"/>
<path d="M157.9 49.8 L163.0 77.2 L171.6 92.7 L181.9 96.1 L202.5 106.4 L206.0 120.2" fill="none" stroke="#8d9fc7" stroke-width="3.2" stroke-linejoin="round"/>
<path d="M113.3 92.7 L120.2 130.4 L127.0 156.0 L130.0 175.0" fill="none" stroke="#8d9fc7" stroke-width="3.2" stroke-linejoin="round"/>
<path d="M270.0 17.2 L257.5 85.8 L231.7 111.6 L206.0 130.4 L206.0 156.0 L196.2 193.6" fill="none" stroke="#8d9fc7" stroke-width="3.2" stroke-linejoin="round"/>
<path d="M140.7 0.0 L142.5 10.3" fill="none" stroke="#8d9fc7" stroke-width="3.2" stroke-linejoin="round"/>
<path d="M349.7 0.0 L334.2 37.8 L320.5 56.6 L289.6 77.2 L286.2 79.0" fill="none" stroke="#8d9fc7" stroke-width="3.2" stroke-linejoin="round"/>
<path d="M315.3 0.0 L308.5 25.7 L286.2 51.5 L270.0 51.5" fill="none" stroke="#8d9fc7" stroke-width="3.2" stroke-linejoin="round"/>
<path d="M286.2 79.0 L320.5 96.1 L329.1 116.7 L337.7 147.6 L345.8 154.4" fill="none" stroke="#8d9fc7" stroke-width="3.2" stroke-linejoin="round"/>
<path d="M317.0 101.3 L303.3 123.6 L269.0 133.9" fill="none" stroke="#8d9fc7" stroke-width="3.2" stroke-linejoin="round"/>
<path d="M449.2 0.0 L423.5 17.2 L372.0 49.8 L346.2 63.5" fill="none" stroke="#8d9fc7" stroke-width="3.2" stroke-linejoin="round"/>
<path d="M269.0 137.3 L320.5 151.0 L345.8 154.4 L456.6 154.4 L539.0 169.8" fill="none" stroke="#8d9fc7" stroke-width="3.2" stroke-linejoin="round"/>
<path d="M341.1 149.3 L406.3 120.2 L539.0 94.4" fill="none" stroke="#8d9fc7" stroke-width="3.2" stroke-linejoin="round"/>
<path d="M0.0 219.2 L68.2 209.0 L129.6 200.5" fill="none" stroke="#8d9fc7" stroke-width="3.2" stroke-linejoin="round"/>
<path d="M95.5 168.0 L119.4 181.7 L145.0 181.7 L162.0 193.6" fill="none" stroke="#8d9fc7" stroke-width="3.2" stroke-linejoin="round"/>
<path d="M153.5 193.6 L158.6 236.3 L187.6 224.3 L213.2 215.8 L196.2 193.6 L170.6 180.0 L153.5 193.6" fill="none" stroke="#8d9fc7" stroke-width="3.2" stroke-linejoin="round"/>
<path d="M187.6 224.3 L269.5 231.2" fill="none" stroke="#8d9fc7" stroke-width="3.2" stroke-linejoin="round"/>
<path d="M76.8 229.5 L119.4 222.6 L153.5 205.6" fill="none" stroke="#8d9fc7" stroke-width="3.2" stroke-linejoin="round"/>
<path d="M187.6 236.3 L204.7 261.9 L221.7 287.5 L230.3 303.0" fill="none" stroke="#8d9fc7" stroke-width="3.2" stroke-linejoin="round"/>
<path d="M345.8 154.4 L350.9 181.7 L362.8 215.8 L357.7 253.3 L345.8 303.0" fill="none" stroke="#8d9fc7" stroke-width="3.2" stroke-linejoin="round"/>
<path d="M539.0 176.6 L490.7 200.5 L405.4 246.5 L362.8 273.8 L328.7 268.7 L310.0 268.7 L289.5 246.5 L269.0 253.3" fill="none" stroke="#8d9fc7" stroke-width="3.2" stroke-linejoin="round"/>
<path d="M315.0 151.0 L303.1 198.8 L291.2 236.3 L286.1 287.5" fill="none" stroke="#8d9fc7" stroke-width="3.2" stroke-linejoin="round"/>
<path d="M200.0 199.0 L240.5 186.8 L282.9 170.6 L317.5 158.3 L345.8 154.4" fill="none" stroke="#8d9fc7" stroke-width="3.2" stroke-linejoin="round"/>
<path d="M229.0 178.5 L238.2 187.0 L252.1 230.0" fill="none" stroke="#8d9fc7" stroke-width="3.2" stroke-linejoin="round"/>
<path d="M176.8 42.9 L214.6 49.8 L240.3 54.9 L270.0 51.5" fill="none" stroke="#afbddb" stroke-width="1.5" stroke-linejoin="round"/>
<path d="M0.0 91.0 L42.9 103.0 L65.2 111.6 L72.1 125.3 L56.6 140.7" fill="none" stroke="#afbddb" stroke-width="1.5" stroke-linejoin="round"/>
<path d="M56.6 140.7 L85.8 106.4 L128.7 89.3 L149.3 65.2 L171.6 49.8 L178.5 42.9" fill="none" stroke="#afbddb" stroke-width="1.5" stroke-linejoin="round"/>
<path d="M0.0 127.0 L25.7 130.4 L56.6 140.7" fill="none" stroke="#afbddb" stroke-width="1.5" stroke-linejoin="round"/>
<path d="M56.6 140.7 L51.2 160.0 L56.3 185.1 L68.2 222.6 L68.2 253.3 L81.9 280.6 L102.3 303.0" fill="none" stroke="#afbddb" stroke-width="1.5" stroke-linejoin="round"/>
<path d="M157.9 49.8 L163.0 77.2 L171.6 92.7 L181.9 96.1 L202.5 106.4 L206.0 120.2" fill="none" stroke="#afbddb" stroke-width="1.5" stroke-linejoin="round"/>
<path d="M113.3 92.7 L120.2 130.4 L127.0 156.0 L130.0 175.0" fill="none" stroke="#afbddb" stroke-width="1.5" stroke-linejoin="round"/>
<path d="M270.0 17.2 L257.5 85.8 L231.7 111.6 L206.0 130.4 L206.0 156.0 L196.2 193.6" fill="none" stroke="#afbddb" stroke-width="1.5" stroke-linejoin="round"/>
<path d="M140.7 0.0 L142.5 10.3" fill="none" stroke="#afbddb" stroke-width="1.5" stroke-linejoin="round"/>
<path d="M349.7 0.0 L334.2 37.8 L320.5 56.6 L289.6 77.2 L286.2 79.0" fill="none" stroke="#afbddb" stroke-width="1.5" stroke-linejoin="round"/>
<path d="M315.3 0.0 L308.5 25.7 L286.2 51.5 L270.0 51.5" fill="none" stroke="#afbddb" stroke-width="1.5" stroke-linejoin="round"/>
<path d="M286.2 79.0 L320.5 96.1 L329.1 116.7 L337.7 147.6 L345.8 154.4" fill="none" stroke="#afbddb" stroke-width="1.5" stroke-linejoin="round"/>
<path d="M317.0 101.3 L303.3 123.6 L269.0 133.9" fill="none" stroke="#afbddb" stroke-width="1.5" stroke-linejoin="round"/>
<path d="M449.2 0.0 L423.5 17.2 L372.0 49.8 L346.2 63.5" fill="none" stroke="#afbddb" stroke-width="1.5" stroke-linejoin="round"/>
<path d="M269.0 137.3 L320.5 151.0 L345.8 154.4 L456.6 154.4 L539.0 169.8" fill="none" stroke="#afbddb" stroke-width="1.5" stroke-linejoin="round"/>
<path d="M341.1 149.3 L406.3 120.2 L539.0 94.4" fill="none" stroke="#afbddb" stroke-width="1.5" stroke-linejoin="round"/>
<path d="M0.0 219.2 L68.2 209.0 L129.6 200.5" fill="none" stroke="#afbddb" stroke-width="1.5" stroke-linejoin="round"/>
<path d="M95.5 168.0 L119.4 181.7 L145.0 181.7 L162.0 193.6" fill="none" stroke="#afbddb" stroke-width="1.5" stroke-linejoin="round"/>
<path d="M153.5 193.6 L158.6 236.3 L187.6 224.3 L213.2 215.8 L196.2 193.6 L170.6 180.0 L153.5 193.6" fill="none" stroke="#afbddb" stroke-width="1.5" stroke-linejoin="round"/>
<path d="M187.6 224.3 L269.5 231.2" fill="none" stroke="#afbddb" stroke-width="1.5" stroke-linejoin="round"/>
<path d="M76.8 229.5 L119.4 222.6 L153.5 205.6" fill="none" stroke="#afbddb" stroke-width="1.5" stroke-linejoin="round"/>
<path d="M187.6 236.3 L204.7 261.9 L221.7 287.5 L230.3 303.0" fill="none" stroke="#afbddb" stroke-width="1.5" stroke-linejoin="round"/>
<path d="M345.8 154.4 L350.9 181.7 L362.8 215.8 L357.7 253.3 L345.8 303.0" fill="none" stroke="#afbddb" stroke-width="1.5" stroke-linejoin="round"/>
<path d="M539.0 176.6 L490.7 200.5 L405.4 246.5 L362.8 273.8 L328.7 268.7 L310.0 268.7 L289.5 246.5 L269.0 253.3" fill="none" stroke="#afbddb" stroke-width="1.5" stroke-linejoin="round"/>
<path d="M315.0 151.0 L303.1 198.8 L291.2 236.3 L286.1 287.5" fill="none" stroke="#afbddb" stroke-width="1.5" stroke-linejoin="round"/>
<path d="M200.0 199.0 L240.5 186.8 L282.9 170.6 L317.5 158.3 L345.8 154.4" fill="none" stroke="#afbddb" stroke-width="1.5" stroke-linejoin="round"/>
<path d="M229.0 178.5 L238.2 187.0 L252.1 230.0" fill="none" stroke="#afbddb" stroke-width="1.5" stroke-linejoin="round"/>
<rect x="419.8" y="6.3" width="26.9" height="13" rx="3" fill="#3d76c7" stroke="#d8e2f0" stroke-width="1"/>
<text x="433.2" y="16.5" font-size="10" text-anchor="middle" fill="#fff">N21</text>
<rect x="308.2" y="48.2" width="26.9" height="13" rx="3" fill="#6a9a44" stroke="#d8e2f0" stroke-width="1"/>
<text x="321.6" y="58.4" font-size="10" text-anchor="middle" fill="#fff">E19</text>
<rect x="122.4" y="70.0" width="26.9" height="13" rx="3" fill="#6a9a44" stroke="#d8e2f0" stroke-width="1"/>
<text x="135.8" y="80.2" font-size="10" text-anchor="middle" fill="#fff">E19</text>
<rect x="268.8" y="60.9" width="26.9" height="13" rx="3" fill="#fff" stroke="#333" stroke-width="1"/>
<text x="282.2" y="71.1" font-size="10" text-anchor="middle" fill="#333">R22</text>
<rect x="229.3" y="99.2" width="20.6" height="13" rx="3" fill="#3d76c7" stroke="#d8e2f0" stroke-width="1"/>
<text x="239.6" y="109.4" font-size="10" text-anchor="middle" fill="#fff">N1</text>
<rect x="-5.2" y="84.1" width="14.3" height="13" rx="3" fill="#3d76c7" stroke="#d8e2f0" stroke-width="1"/>
<text x="2.0" y="94.3" font-size="10" text-anchor="middle" fill="#fff">9</text>
<rect x="-2.6" y="119.3" width="26.9" height="13" rx="3" fill="#6a9a44" stroke="#d8e2f0" stroke-width="1"/>
<text x="10.8" y="129.5" font-size="10" text-anchor="middle" fill="#fff">E40</text>
<rect x="376.4" y="131.6" width="20.6" height="13" rx="3" fill="#3d76c7" stroke="#d8e2f0" stroke-width="1"/>
<text x="386.7" y="141.8" font-size="10" text-anchor="middle" fill="#fff">N2</text>
<rect x="349.8" y="148.2" width="26.9" height="13" rx="3" fill="#6a9a44" stroke="#d8e2f0" stroke-width="1"/>
<text x="363.2" y="158.4" font-size="10" text-anchor="middle" fill="#fff">E40</text>
<rect x="109.3" y="174.5" width="20.6" height="13" rx="3" fill="#3d76c7" stroke="#d8e2f0" stroke-width="1"/>
<text x="119.6" y="184.7" font-size="10" text-anchor="middle" fill="#fff">N9</text>
<rect x="88.5" y="199.2" width="20.6" height="13" rx="3" fill="#3d76c7" stroke="#d8e2f0" stroke-width="1"/>
<text x="98.8" y="209.4" font-size="10" text-anchor="middle" fill="#fff">N8</text>
<rect x="351.8" y="219.3" width="20.6" height="13" rx="3" fill="#fff" stroke="#333" stroke-width="1"/>
<text x="362.1" y="229.5" font-size="10" text-anchor="middle" fill="#333">R0</text>
<rect x="427.5" y="225.6" width="20.6" height="13" rx="3" fill="#3d76c7" stroke="#d8e2f0" stroke-width="1"/>
<text x="437.8" y="235.8" font-size="10" text-anchor="middle" fill="#fff">N3</text>
<rect x="296.5" y="248.5" width="20.6" height="13" rx="3" fill="#3d76c7" stroke="#d8e2f0" stroke-width="1"/>
<text x="306.8" y="258.7" font-size="10" text-anchor="middle" fill="#fff">N3</text>
<text x="170.0" y="5.0" font-size="11" fill="#333" font-weight="normal" text-anchor="middle" stroke="#fff" stroke-width="2.5" paint-order="stroke" >Meise Grimbergen</text>
<text x="279.3" y="27.0" font-size="11" fill="#333" font-weight="normal" text-anchor="middle" stroke="#fff" stroke-width="2.5" paint-order="stroke" >Vilvoorde</text>
<text x="388.3" y="44.5" font-size="11" fill="#333" font-weight="normal" text-anchor="middle" stroke="#fff" stroke-width="2.5" paint-order="stroke" >Steenokkerzeel</text>
<text x="179.0" y="59.5" font-size="12.5" fill="#555" font-weight="bold" text-anchor="middle" stroke="#fff" stroke-width="2.5" paint-order="stroke" transform="rotate(-8 179 55)" letter-spacing="0.3">FLANDERS</text>
<text x="185.4" y="106.0" font-size="12.5" fill="#555" font-weight="bold" text-anchor="middle" stroke="#fff" stroke-width="2.5" paint-order="stroke" transform="rotate(-8 185 102)" letter-spacing="0.3">BRUSSELS</text>
<text x="381.5" y="68.0" font-size="13.5" fill="#1a73e8" font-weight="normal" text-anchor="start" stroke="#fff" stroke-width="2.5" paint-order="stroke" >Luchthaven</text>
<text x="381.5" y="82.0" font-size="13.5" fill="#1a73e8" font-weight="normal" text-anchor="start" stroke="#fff" stroke-width="2.5" paint-order="stroke" >Brussel</text>
<text x="293.5" y="101.0" font-size="8.5" fill="#555" font-weight="bold" text-anchor="middle" stroke="#fff" stroke-width="2.5" paint-order="stroke" letter-spacing="1.3">DIEGEM</text>
<text x="120.5" y="122.0" font-size="11" fill="#333" font-weight="normal" text-anchor="middle" stroke="#fff" stroke-width="2.5" paint-order="stroke" >Jette</text>
<text x="450.0" y="115.0" font-size="11" fill="#333" font-weight="normal" text-anchor="middle" stroke="#fff" stroke-width="2.5" paint-order="stroke" >Kortenberg</text>
<text x="346.3" y="135.0" font-size="11" fill="#333" font-weight="normal" text-anchor="middle" stroke="#fff" stroke-width="2.5" paint-order="stroke" >Zaventem</text>
<text x="245.5" y="146.5" font-size="11" fill="#333" font-weight="normal" text-anchor="middle" stroke="#fff" stroke-width="2.5" paint-order="stroke" >Evere</text>
<text x="90.7" y="170.0" font-size="10.5" fill="#333" font-weight="normal" text-anchor="middle" stroke="#fff" stroke-width="2.5" paint-order="stroke" >Sint-Agatha-Berchem</text>
<text x="202.3" y="171.5" font-size="15" fill="#222" font-weight="normal" text-anchor="middle" stroke="#fff" stroke-width="2.5" paint-order="stroke" letter-spacing="-0.1">Schaerbeek</text>
<text x="202.3" y="171.5" font-size="15" fill="#222" stroke="#222" stroke-width="0.25" text-anchor="middle" letter-spacing="-0.1">Schaerbeek</text>
<text x="178.3" y="213.5" font-size="24" fill="#222" font-weight="normal" text-anchor="middle" stroke="#fff" stroke-width="2.5" paint-order="stroke" >Brussels</text>
<text x="178.3" y="213.5" font-size="24" fill="#222" stroke="#222" stroke-width="0.6" text-anchor="middle">Brussels</text>
<text x="39.3" y="218.0" font-size="11" fill="#333" font-weight="normal" text-anchor="middle" stroke="#fff" stroke-width="2.5" paint-order="stroke" >Dilbeek</text>
<text x="101.7" y="253.5" font-size="15.5" fill="#222" font-weight="normal" text-anchor="middle" stroke="#fff" stroke-width="2.5" paint-order="stroke" letter-spacing="-0.1">Anderlecht</text>
<text x="101.7" y="253.5" font-size="15.5" fill="#222" stroke="#222" stroke-width="0.25" text-anchor="middle" letter-spacing="-0.1">Anderlecht</text>
<text x="199.0" y="254.0" font-size="11" fill="#333" font-weight="normal" text-anchor="middle" stroke="#fff" stroke-width="2.5" paint-order="stroke" >Ixelles</text>
<text x="287.3" y="243.5" font-size="10.5" fill="#333" font-weight="normal" text-anchor="middle" stroke="#fff" stroke-width="2.5" paint-order="stroke" >Woluwe-Saint-Pierre</text>
<text x="398.3" y="259.5" font-size="11" fill="#333" font-weight="normal" text-anchor="middle" stroke="#fff" stroke-width="2.5" paint-order="stroke" >Tervuren</text>
<text x="279.3" y="281.0" font-size="11" fill="#333" font-weight="normal" text-anchor="middle" stroke="#fff" stroke-width="2.5" paint-order="stroke" >Auderghem</text>
<text x="520.0" y="206.0" font-size="9" fill="#444" font-weight="normal" text-anchor="start" stroke="#fff" stroke-width="2.5" paint-order="stroke" letter-spacing="1.5">DAA</text>
<path d="M360.8 85.8 L358.3 89.3 L349.7 97.0 L341.0 97.5 L320.5 98.7 L317.0 101.3 L317.0 108.0 L322.2 109.9 L327.4 118.4 L332.5 133.9 L337.7 147.6 L337.2 151.0 L335.5 156.1 L320.2 159.5 L294.6 171.5 L270.0 185.1 L255.8 193.6 L243.9 202.2 L235.4 203.9 L218.3 215.8 L179.1 205.6 L180.0 200.5" fill="none" stroke="#e8110f" stroke-width="2.4" stroke-linejoin="round"/>
<circle cx="367.7" cy="69.5" r="6.5" fill="#fff"/><circle cx="367.7" cy="69.5" r="5" fill="#1a73e8"/>
<path d="M348.7 68.3 A12.5 12.5 0 1 1 372.9 68.3 Q369.6 76.5 360.8 86.0 Q352.1 76.5 348.7 68.3 Z" fill="#ea4335" stroke="#c5221f" stroke-width="0.8"/><text x="360.8" y="70.2" font-size="14" fill="#fff" text-anchor="middle">A</text>
<path d="M166.9 184.8 A12.5 12.5 0 1 1 191.1 184.8 Q187.8 192.9 179.0 205.0 Q170.2 192.9 166.9 184.8 Z" fill="#ea4335" stroke="#c5221f" stroke-width="0.8"/><text x="179.0" y="186.7" font-size="14" fill="#fff" text-anchor="middle">B</text>
<rect x="10" y="10" width="168" height="40" rx="2" fill="#fff" filter="url(#sh)"/>
<defs><filter id="sh" x="-10%" y="-20%" width="120%" height="150%"><feDropShadow dx="0" dy="1" stdDeviation="1" flood-color="#000" flood-opacity="0.25"/></filter></defs>
<line x1="79.5" y1="10" x2="79.5" y2="50" stroke="#e6e6e6" stroke-width="1"/>
<text x="44.5" y="36" font-size="17.5" font-weight="bold" fill="#000" text-anchor="middle">Map</text>
<text x="128.5" y="36" font-size="17.5" fill="#565656" text-anchor="middle">Satellite</text>
<rect x="489" y="10" width="40" height="40" rx="2" fill="#fff" filter="url(#sh)"/>
<path d="M500 25 V21 H504 M514 21 H518 V25 M518 35 V39 H514 M504 39 H500 V35" fill="none" stroke="#666" stroke-width="2.2"/>
<circle cx="508.6" cy="187" r="20" fill="#fff" filter="url(#sh)"/>
<path d="M505 179 L508.6 175.5 L512.2 179 M505 195 L508.6 198.5 L512.2 195 M501 183.4 L497.6 187 L501 190.6 M516.2 183.4 L519.6 187 L516.2 190.6" fill="none" stroke="#666" stroke-width="2.3"/>
<rect x="489" y="239" width="40" height="40" rx="2" fill="#fff" filter="url(#sh)"/>
<circle cx="508.4" cy="249" r="5.1" fill="#fbbc05" stroke="#d48a00" stroke-width="0.6"/><path d="M503.3 254.5 H513.5 Q515.5 255 516 258 L517 264.5 H514.8 L513.6 260 V274 H509.6 V266 H507.2 V274 H503.2 V260 L502 264.5 H499.8 L500.8 258 Q501.3 255 503.3 254.5 Z" fill="#fbbc05" stroke="#d48a00" stroke-width="0.6"/><path d="M505.5 254.6 L508.4 258.5 L511.3 254.6 Z" fill="#e37400"/>
<rect x="185" y="289" width="354" height="14" fill="#f5f5f5" fill-opacity="0.8"/>
<text x="190" y="299" font-size="9.8" fill="#333">Keyboard shortcuts</text>
<text x="288.5" y="299" font-size="9.8" fill="#333">Map data ©2026 Google</text>
<text x="409.5" y="299" font-size="9.8" fill="#333">Terms</text>
<text x="449.5" y="299" font-size="9.8" fill="#333">Report a map error</text>
<line x1="283" y1="290" x2="283" y2="302" stroke="#ddd"/><line x1="403" y1="290" x2="403" y2="302" stroke="#ddd"/><line x1="443" y1="290" x2="443" y2="302" stroke="#ddd"/>
<text x="10" y="296" font-size="17" fill="#4285f4" stroke="#fff" stroke-width="2" paint-order="stroke">G<tspan fill="#ea4335">o</tspan><tspan fill="#fbbc05">o</tspan><tspan fill="#4285f4">g</tspan><tspan fill="#34a853">l</tspan><tspan fill="#ea4335">e</tspan></text>
</svg>
<div class="abs" style="left:20px;top:729px;width:539px;height:363px;border:1px solid #dedede;border-radius:3.5px;"></div>
<div class="abs" style="left:41.5px;top:756.0px;font-size:19.5px;line-height:1;color:#333;font-weight:normal;white-space:nowrap;">Total price</div>
<div class="abs" style="right:944.5px;top:805.6px;font-size:14px;line-height:1;color:#444;font-weight:normal;white-space:nowrap;text-align:right;">Trip distance</div>
<div class="abs" style="left:213.5px;top:805.6px;font-size:14px;line-height:1;color:#333;font-weight:normal;white-space:nowrap;">13.98km</div>
<div class="abs" style="right:944.5px;top:860.3px;font-size:14px;line-height:1;color:#444;font-weight:normal;white-space:nowrap;text-align:right;">Trip duration</div>
<div class="abs" style="left:213.5px;top:860.3px;font-size:14px;line-height:1;color:#333;font-weight:normal;white-space:nowrap;">22 minutes</div>
<div class="abs" style="left:579px;top:69px;width:539px;height:1023px;border:1px solid #dedede;border-radius:3.5px;"></div>
<div class="abs" style="left:600.5px;top:95.5px;font-size:19.5px;line-height:1;color:#333;font-weight:normal;white-space:nowrap;">Additional Info</div>
<div class="abs" style="left:772px;top:147px;width:13px;height:13px;border:1px solid #6f6f6f;border-radius:2px;background:#fff;"></div>
<div class="abs" style="left:802.5px;top:144.7px;font-size:14px;line-height:1;color:#444;font-weight:normal;white-space:nowrap;">Is shared</div>
<div class="abs" style="right:385.5px;top:201.1px;font-size:14px;line-height:1;color:#444;font-weight:normal;white-space:nowrap;text-align:right;">Passengers</div>
<div class="abs" style="left:772px;top:191px;width:325px;height:35px;border:1px solid #dcdcdc;border-radius:3px;background:#fff;"></div>
<div class="abs" style="left:785.5px;top:201.1px;font-size:14px;line-height:1;color:#333;font-weight:normal;white-space:nowrap;">3</div>
<div class="abs" style="right:385.5px;top:256.1px;font-size:14px;line-height:1;color:#444;font-weight:normal;white-space:nowrap;text-align:right;">Luggage</div>
<div class="abs" style="left:772px;top:246px;width:325px;height:35px;border:1px solid #dcdcdc;border-radius:3px;background:#fff;"></div>
<div class="abs" style="left:785.5px;top:256.1px;font-size:14px;line-height:1;color:#333;font-weight:normal;white-space:nowrap;">2</div>
<div class="abs" style="right:385.5px;top:311.1px;font-size:14px;line-height:1;color:#444;font-weight:normal;white-space:nowrap;text-align:right;">Baby seat: (0-1 years)</div>
<div class="abs" style="left:772px;top:301px;width:325px;height:35px;border:1px solid #dcdcdc;border-radius:3px;background:#fff;"></div>
<div class="abs" style="left:785.5px;top:311.1px;font-size:14px;line-height:1;color:#a0a0a0;font-weight:normal;white-space:nowrap;">One or more</div>
<div class="abs" style="right:385.5px;top:366.1px;font-size:14px;line-height:1;color:#444;font-weight:normal;white-space:nowrap;text-align:right;">Child seat: (1-4 years)</div>
<div class="abs" style="left:772px;top:356px;width:325px;height:35px;border:1px solid #dcdcdc;border-radius:3px;background:#fff;"></div>
<div class="abs" style="left:785.5px;top:366.1px;font-size:14px;line-height:1;color:#a0a0a0;font-weight:normal;white-space:nowrap;">One or more</div>
<div class="abs" style="right:385.5px;top:421.1px;font-size:14px;line-height:1;color:#444;font-weight:normal;white-space:nowrap;text-align:right;">Booster seat: (4-10</div>
<div class="abs" style="right:385.5px;top:442.6px;font-size:14px;line-height:1;color:#444;font-weight:normal;white-space:nowrap;text-align:right;">years)</div>
<div class="abs" style="left:772px;top:411px;width:325px;height:35px;border:1px solid #dcdcdc;border-radius:3px;background:#fff;"></div>
<div class="abs" style="left:785.5px;top:421.1px;font-size:14px;line-height:1;color:#a0a0a0;font-weight:normal;white-space:nowrap;">One or more</div>
<div class="abs" style="right:385.5px;top:497.1px;font-size:14px;line-height:1;color:#444;font-weight:normal;white-space:nowrap;text-align:right;">Bikes</div>
<div class="abs" style="left:772px;top:487px;width:325px;height:35px;border:1px solid #dcdcdc;border-radius:3px;background:#fff;"></div>
<div class="abs" style="left:785.5px;top:497.1px;font-size:14px;line-height:1;color:#a0a0a0;font-weight:normal;white-space:nowrap;">One or more</div>
<div class="abs" style="right:385.5px;top:552.1px;font-size:14px;line-height:1;color:#444;font-weight:normal;white-space:nowrap;text-align:right;">Waiting time</div>
<div class="abs" style="left:772px;top:542px;width:325px;height:35px;border:1px solid #dcdcdc;border-radius:3px;background:#fff;"></div>
<div class="abs" style="left:785.5px;top:552.1px;font-size:14px;line-height:1;color:#a0a0a0;font-weight:normal;white-space:nowrap;">Select time</div>
<div class="abs" style="right:385.5px;top:663.1px;font-size:14px;line-height:1;color:#444;font-weight:normal;white-space:nowrap;text-align:right;">Ski equipment</div>
<div class="abs" style="left:772px;top:653px;width:325px;height:35px;border:1px solid #dcdcdc;border-radius:3px;background:#fff;"></div>
<div class="abs" style="right:385.5px;top:829.1px;font-size:14px;line-height:1;color:#444;font-weight:normal;white-space:nowrap;text-align:right;">Flight number</div>
<div class="abs" style="left:772px;top:819px;width:325px;height:35px;border:1px solid #dcdcdc;border-radius:3px;background:#fff;"></div>
<div class="abs" style="right:385.5px;top:884.1px;font-size:14px;line-height:1;color:#444;font-weight:normal;white-space:nowrap;text-align:right;">Airline</div>
<div class="abs" style="left:772px;top:874px;width:325px;height:35px;border:1px solid #dcdcdc;border-radius:3px;background:#fff;"></div>
<div class="abs" style="left:772px;top:609px;width:13px;height:13px;border:1px solid #6f6f6f;border-radius:2px;background:#fff;"></div>
<div class="abs" style="left:802.5px;top:607.1px;font-size:14px;line-height:1;color:#444;font-weight:normal;white-space:nowrap;">Disabled place</div>
<div class="abs" style="right:385.5px;top:718.1px;font-size:14px;line-height:1;color:#444;font-weight:normal;white-space:nowrap;text-align:right;">Pets</div>
<div class="abs" style="left:773.5px;top:718.1px;font-size:14px;line-height:1;color:#2b8fe3;font-weight:normal;white-space:nowrap;">Add new</div>
<div class="abs" style="left:772px;top:775px;width:13px;height:13px;border:1px solid #6f6f6f;border-radius:2px;background:#fff;"></div>
<div class="abs" style="left:802.5px;top:773.1px;font-size:14px;line-height:1;color:#444;font-weight:normal;white-space:nowrap;">Meet &amp; greet</div>
<!--MEND-->
</div>
</body></html>
